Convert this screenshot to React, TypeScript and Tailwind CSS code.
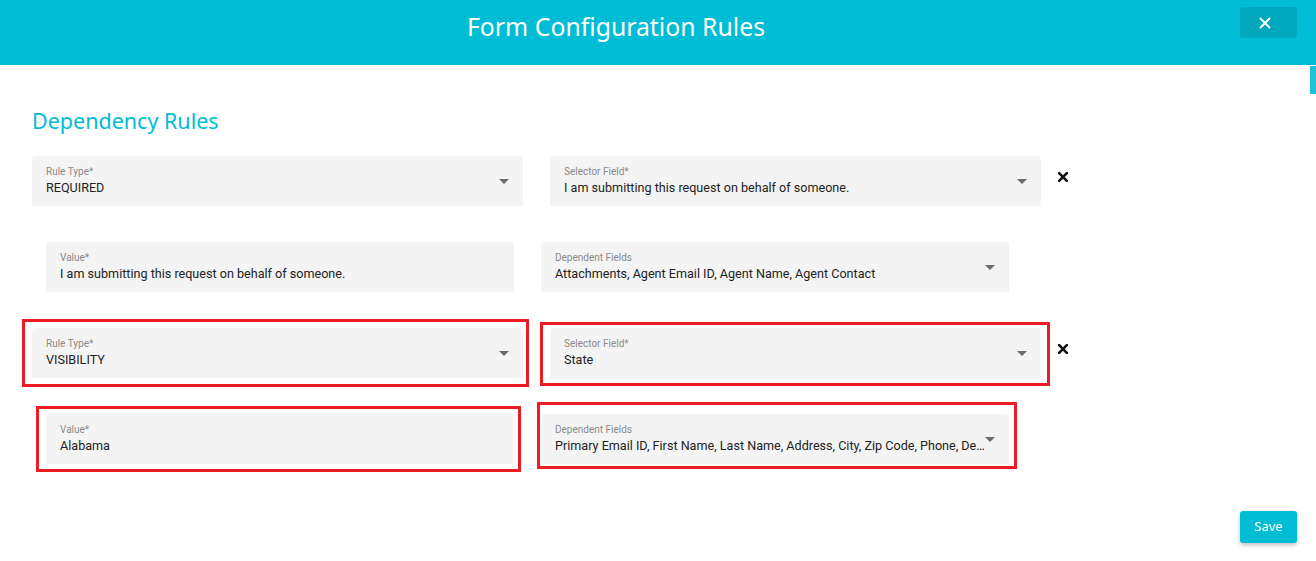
const CYAN = "bg-[#00bcd4]"

type FieldProps = {
  label: string
  value: string
  width: string
  select?: boolean
}

function Caret() {
  return (
    <svg width="10" height="5" viewBox="0 0 10 5" className="shrink-0">
      <path d="M0 0 L10 0 L5 5 Z" fill="#6b6b6b" />
    </svg>
  )
}

function Field({ label, value, width, select = true }: FieldProps) {
  return (
    <div className={`${width} flex h-[50px] items-center rounded-t-[4px] bg-[#f4f4f4] pl-[14px] pr-[14px]`}>
      <div className="flex min-w-0 flex-1 flex-col">
        <span className="text-[10px] leading-[12px] text-[#8a8a8a]">{label}</span>
        <span className="mt-[1px] truncate text-[12.6px] leading-[17px] text-[#222]">{value}</span>
      </div>
      {select && <Caret />}
    </div>
  )
}

function RemoveIcon() {
  return (
    <svg width="10" height="10" viewBox="0 0 10 10" className="mt-[16px] ml-[17px] shrink-0 self-start">
      <path d="M1.2 1.2 L8.8 8.8 M8.8 1.2 L1.2 8.8" stroke="#111" strokeWidth="2.6" strokeLinecap="square" />
    </svg>
  )
}

export default function App() {
  return (
    <div className="h-[561px] w-full overflow-hidden bg-white font-['Roboto',sans-serif]">
      <header className={`flex h-[65px] ${CYAN}`}>
        <h1 className="flex-1 pt-[9px] pr-[8px] text-center font-['Noto_Sans',sans-serif] text-[24.8px] leading-[34px] text-white">
          Form Configuration Rules
        </h1>
        <button className="mt-[7px] mr-[19px] flex h-[31px] w-[57px] items-center justify-center rounded-[3px] bg-[#00a8bd] pr-[8px]">
          <svg width="12" height="12" viewBox="0 0 12 12">
            <path d="M1 1 L11 11 M11 1 L1 11" stroke="white" strokeWidth="2" />
          </svg>
        </button>
      </header>

      <div className="relative pt-[41px]">
        <div className="absolute top-[1px] right-0 h-[28px] w-[6px] bg-[#1ec2d8]" />

        <h2 className="pl-[32px] font-['Noto_Sans',sans-serif] text-[21.5px] leading-[30px] text-[#00bcd4]">
          Dependency Rules
        </h2>

        <div className="mt-[20px] flex pl-[32px]">
          <Field width="w-[491px]" label="Rule Type*" value="REQUIRED" />
          <div className="ml-[27px]">
            <Field width="w-[491px]" label="Selector Field*" value="I am submitting this request on behalf of someone." />
          </div>
          <RemoveIcon />
        </div>

        <div className="mt-[36px] flex pl-[46px]">
          <Field width="w-[468px]" label="Value*" value="I am submitting this request on behalf of someone." select={false} />
          <div className="ml-[27px]">
            <Field width="w-[468px]" label="Dependent Fields" value="Attachments, Agent Email ID, Agent Name, Agent Contact" />
          </div>
        </div>

        <div className="mt-[36px] flex pl-[32px]">
          <div className="relative">
            <Field width="w-[491px]" label="Rule Type*" value="VISIBILITY" />
            <span className="pointer-events-none absolute -top-[9px] -right-[6px] -bottom-[9px] -left-[10px] border-[3px] border-[#ed1c24]" />
          </div>
          <div className="relative ml-[27px]">
            <Field width="w-[491px]" label="Selector Field*" value="State" />
            <span className="pointer-events-none absolute -top-[6px] -right-[9px] -bottom-[8px] -left-[10px] border-[3px] border-[#ed1c24]" />
          </div>
          <RemoveIcon />
        </div>

        <div className="mt-[36px] flex pl-[46px]">
          <div className="relative">
            <Field width="w-[468px]" label="Value*" value="Alabama" select={false} />
            <span className="pointer-events-none absolute -top-[8px] -right-[7px] -bottom-[8px] -left-[10px] border-[3px] border-[#ed1c24]" />
          </div>
          <div className="relative ml-[27px]">
            <Field
              width="w-[468px]"
              label="Dependent Fields"
              value="Primary Email ID, First Name, Last Name, Address, City, Zip Code, Phone, Department, Country"
            />
            <span className="pointer-events-none absolute -top-[12px] -right-[8px] -bottom-[5px] -left-[4px] border-[3px] border-[#ed1c24]" />
          </div>
        </div>

        <div className="mt-[47px] flex justify-end pr-[19px]">
          <button className={`h-[32px] w-[57px] rounded-[3px] ${CYAN} font-['Noto_Sans',sans-serif] text-[13px] text-white shadow-[0_2px_4px_rgba(0,0,0,0.25)]`}>
            Save
          </button>
        </div>
      </div>
    </div>
  )
}
